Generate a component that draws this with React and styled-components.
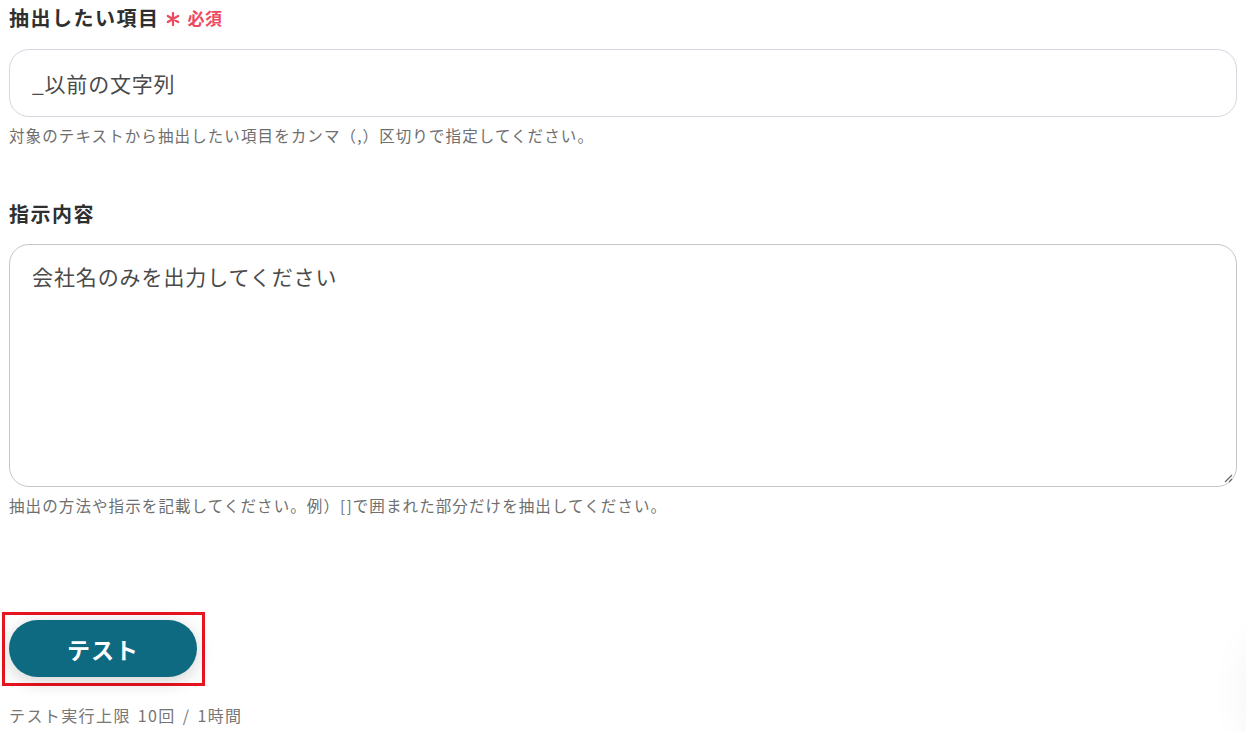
import React from 'react';
import styled, { createGlobalStyle } from 'styled-components';

const GlobalStyle = createGlobalStyle`
  body {
    margin: 0;
    background: #fff;
    font-family: "Noto Sans CJK JP", "Noto Sans", sans-serif;
    color: #333;
  }
`;

const Page = styled.div`
  padding: 0 9px;
  display: flex;
  flex-direction: column;
`;

const Field = styled.div`
  display: flex;
  flex-direction: column;
  margin-bottom: ${(p) => p.gap || 0}px;
`;

const Label = styled.div`
  font-size: 20px;
  font-weight: 700;
  color: #2f2f2f;
  line-height: 36px;
  letter-spacing: 1.5px;
  display: flex;
  align-items: center;
  gap: 6px;
`;

const Required = styled.span`
  color: #ec4a61;
  font-size: 17px;
  font-weight: 700;
  display: flex;
  align-items: center;
  gap: 8px;
  letter-spacing: 0.5px;
`;

const Star = styled.svg`
  display: block;
  margin-top: 2px;
`;

const Input = styled.div`
  margin-top: 13px;
  height: 66px;
  border: 1px solid #d3d7de;
  border-radius: 20px;
  padding: 0 22px;
  display: flex;
  align-items: center;
  font-size: 21px;
  letter-spacing: 0.8px;
  color: #4a4a4a;
`;

const TextArea = styled.div`
  margin-top: 12px;
  height: 243px;
  border: 1px solid #c4c6ca;
  border-radius: 20px;
  padding: 16px 22px;
  box-sizing: border-box;
  font-size: 21px;
  letter-spacing: 0.9px;
  color: #4a4a4a;
  position: relative;
`;

const Grip = styled.svg`
  position: absolute;
  right: 3px;
  bottom: 3px;
`;

const Help = styled.div`
  margin-top: 6px;
  font-size: 15.5px;
  letter-spacing: 1.1px;
  color: #6e6e6e;
  line-height: 24px;
`;

const ButtonFrame = styled.div`
  align-self: flex-start;
  margin-left: -7px;
  border: 3px solid #e8141f;
  padding: 5px 5px 6px 4px;
  display: flex;
`;

const TestButton = styled.button`
  width: 188px;
  height: 57px;
  border: none;
  border-radius: 29px;
  background: #0d6a81;
  color: #fff;
  font-family: "Noto Sans CJK JP", "Noto Sans", sans-serif;
  font-size: 23px;
  font-weight: 700;
  letter-spacing: 1px;
  box-shadow: 0 4px 18px rgba(0, 0, 0, 0.18);
  cursor: pointer;
`;

const Limit = styled.div`
  margin-top: 17px;
  font-size: 16px;
  letter-spacing: 1.4px;
  word-spacing: 2px;
  color: #777;
  line-height: 24px;
`;

const FloatShadow = styled.div`
  position: fixed;
  right: -80px;
  bottom: -20px;
  width: 80px;
  height: 120px;
  border-radius: 40px;
  background: #fff;
  box-shadow: 0 0 40px rgba(0, 0, 0, 0.05);
`;

export default function App() {
  return (
    <>
      <GlobalStyle />
      <Page>
        <Field gap={49}>
          <Label>
            抽出したい項目
            <Required>
              <Star width="14" height="14" viewBox="0 0 14 14">
                <path
                  d="M7 1 V13 M1.8 4 L12.2 10 M1.8 10 L12.2 4"
                  stroke="#ec4a61"
                  strokeWidth="2.2"
                  strokeLinecap="round"
                />
              </Star>
              <span>必須</span>
            </Required>
          </Label>
          <Input>_以前の文字列</Input>
          <Help>対象のテキストから抽出したい項目をカンマ（,）区切りで指定してください。</Help>
        </Field>
        <Field gap={95}>
          <Label>指示内容</Label>
          <TextArea>
            会社名のみを出力してください
            <Grip width="10" height="10" viewBox="0 0 10 10">
              <path d="M9 2 L2 9 M9 6 L6 9" stroke="#666" strokeWidth="1.2" />
            </Grip>
          </TextArea>
          <Help>抽出の方法や指示を記載してください。例）[]で囲まれた部分だけを抽出してください。</Help>
        </Field>
        <ButtonFrame>
          <TestButton>テスト</TestButton>
        </ButtonFrame>
        <Limit>テスト実行上限 10回 / 1時間</Limit>
      </Page>
      <FloatShadow />
    </>
  );
}
